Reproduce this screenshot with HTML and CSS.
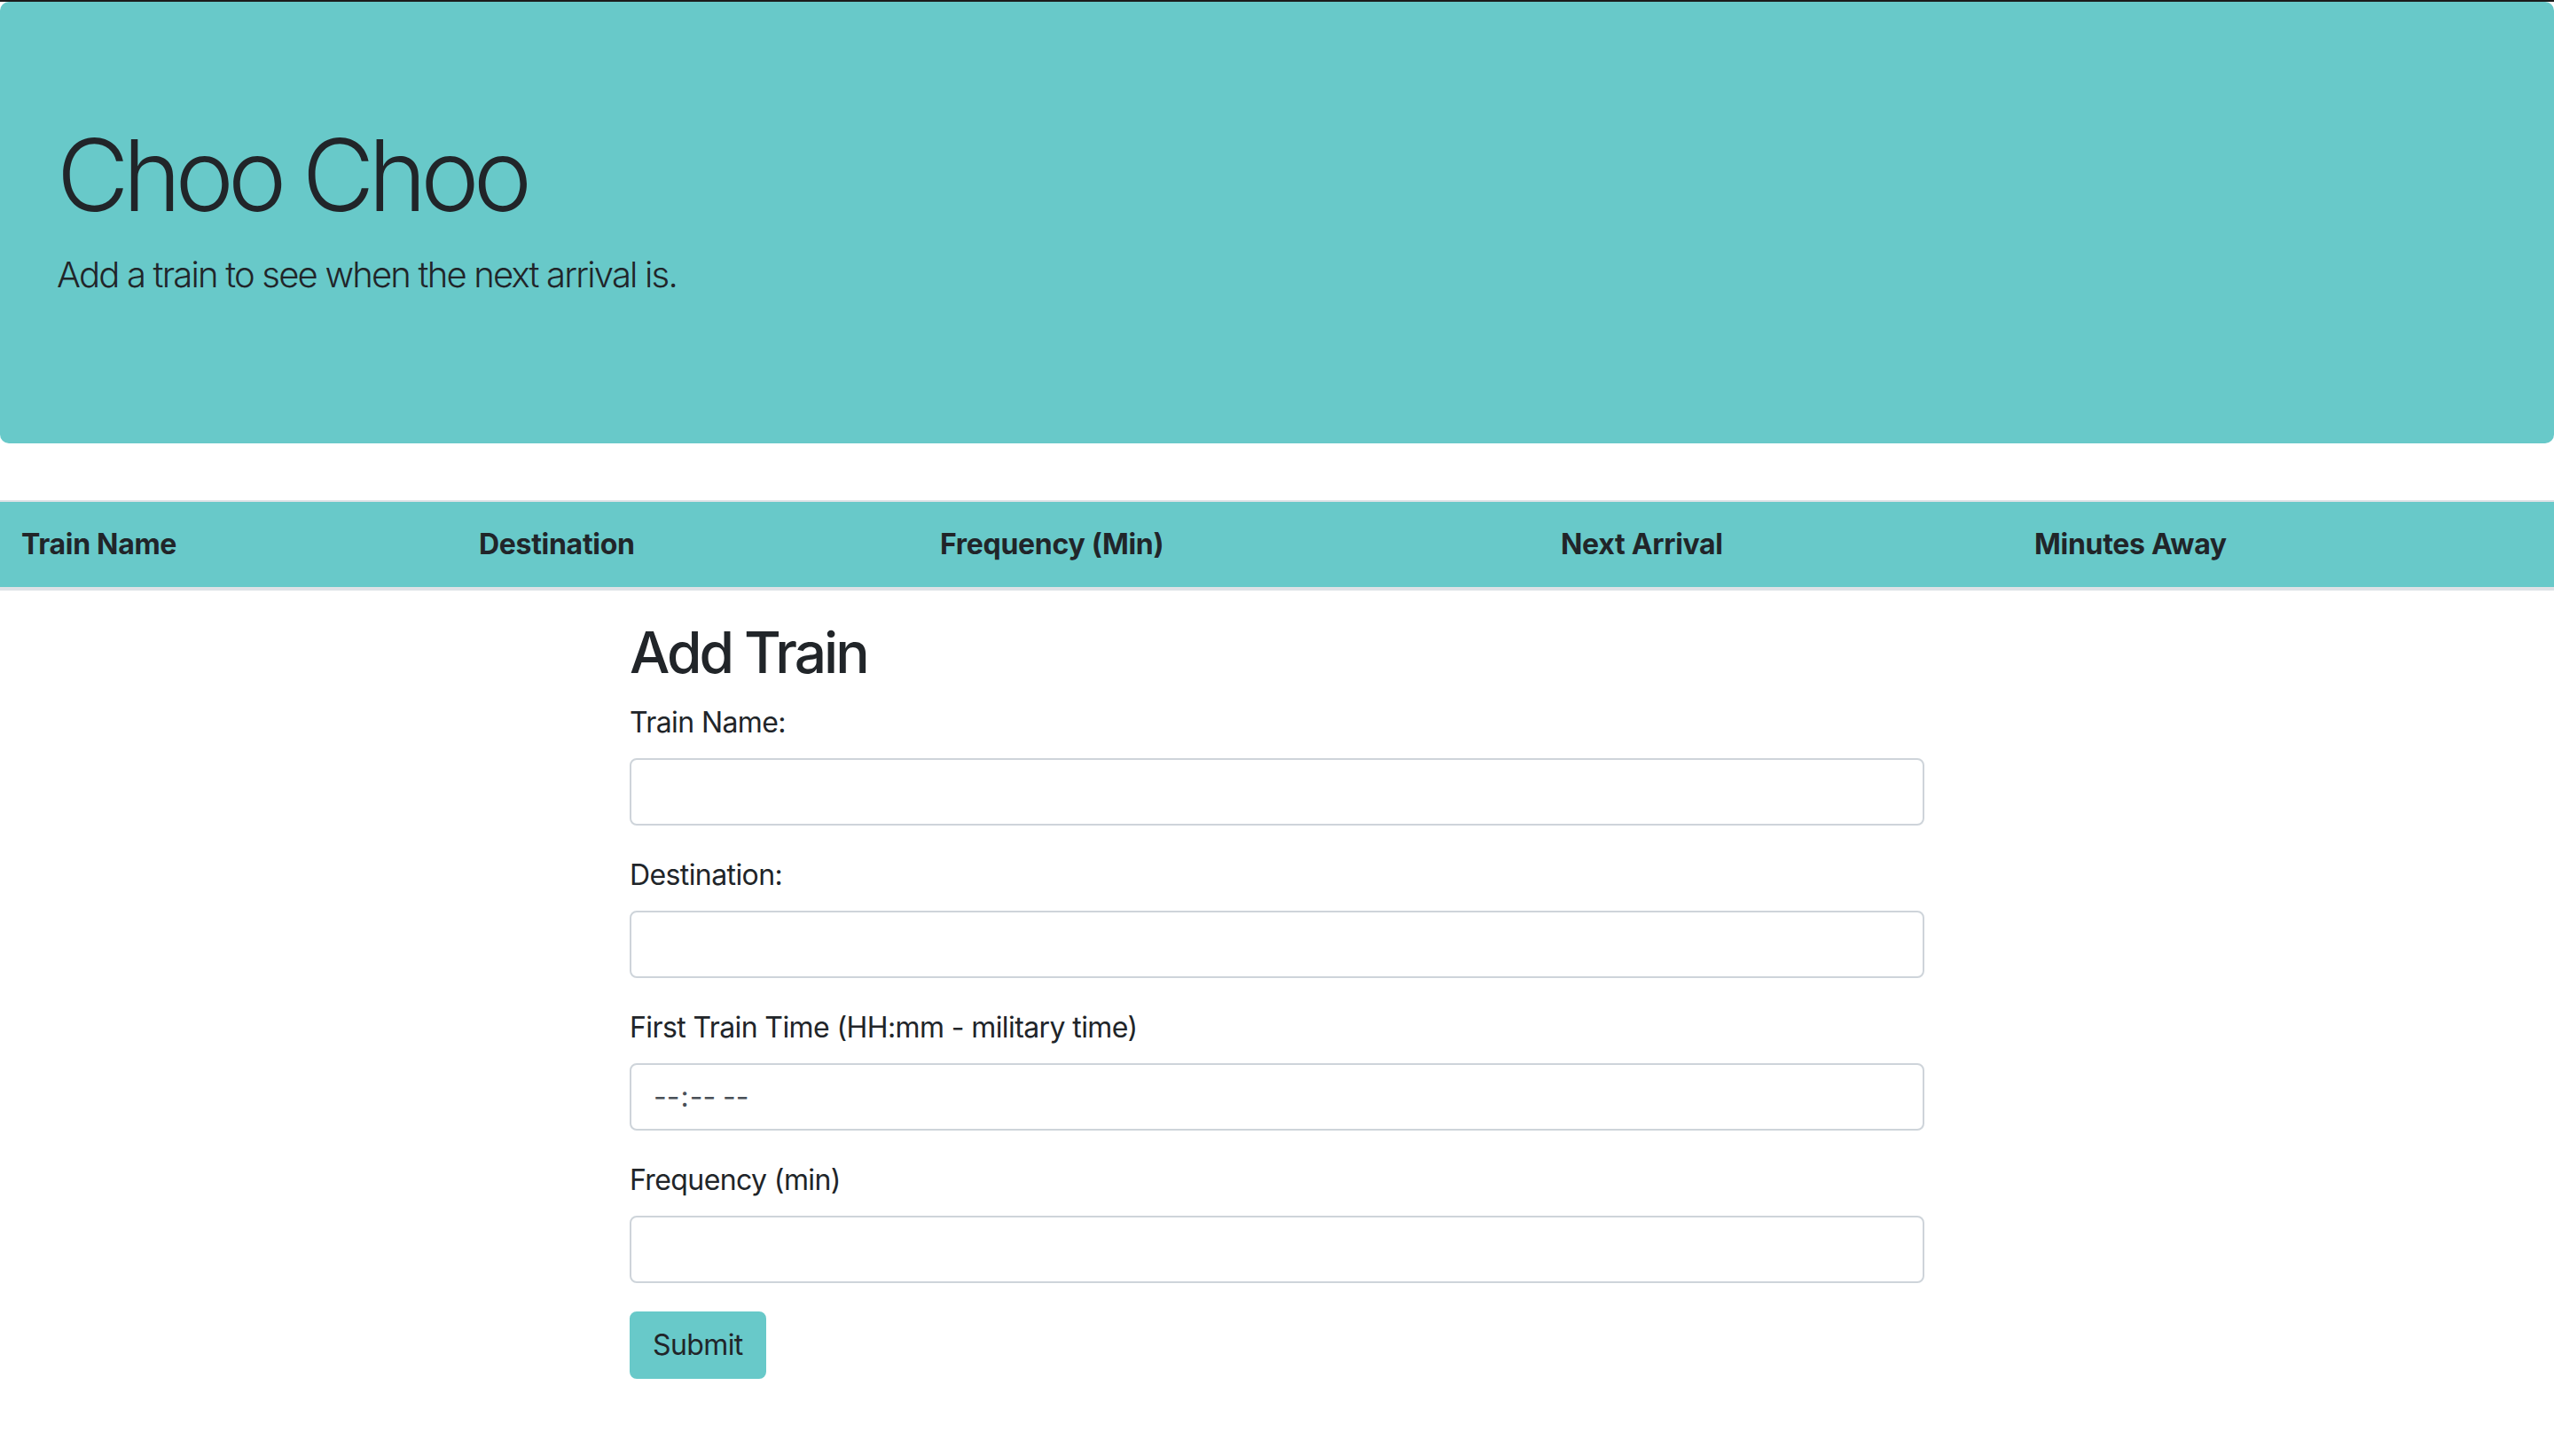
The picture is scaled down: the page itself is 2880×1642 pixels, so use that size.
FILE: index.html
```html
<!DOCTYPE html>
<html lang="en">
<head>
<meta charset="utf-8">
<title>Choo Choo</title>
<link rel="stylesheet" href="styles.css">
</head>
<body>
<div class="topline"></div>
<header class="jumbotron">
  <h1 class="display-4">Choo Choo</h1>
  <p class="lead">Add a train to see when the next arrival is.</p>
</header>
<table class="table">
  <thead>
    <tr>
      <th class="c1">Train Name</th>
      <th class="c2">Destination</th>
      <th class="c3">Frequency (Min)</th>
      <th class="c4">Next Arrival</th>
      <th class="c5">Minutes Away</th>
    </tr>
  </thead>
  <tbody></tbody>
</table>
<main class="container">
  <div class="col">
    <h2 class="title">Add Train</h2>
    <form class="form">
      <div class="form-group">
        <label for="name">Train Name:</label>
        <input class="form-control" id="name" type="text">
      </div>
      <div class="form-group">
        <label for="dest">Destination:</label>
        <input class="form-control" id="dest" type="text">
      </div>
      <div class="form-group">
        <label for="time">First Train Time (HH:mm - military time)</label>
        <input class="form-control time" id="time" type="time">
      </div>
      <div class="form-group">
        <label for="freq">Frequency (min)</label>
        <input class="form-control" id="freq" type="text">
      </div>
      <button class="btn" type="button">Submit</button>
    </form>
  </div>
</main>
</body>
</html>
```
FILE: styles.css
```css
html { font-size: 32px; }
* { box-sizing: border-box; }
body {
  margin: 0;
  font-family: "Inter", "Roboto", "Liberation Sans", sans-serif;
  font-size: 1rem;
  line-height: 1.5;
  color: #212529;
  background: #fff;
}
.topline { height: 2px; background: #1c1c1c; }
.jumbotron {
  background: #68c9c9;
  padding: 4rem 2rem;
  margin-bottom: 2rem;
  border-radius: 10px;
}
.display-4 {
  margin: 0 0 .5rem;
  font-size: 3.5rem;
  font-weight: 300;
  line-height: 1.2;
  letter-spacing: -7px;
}
.lead {
  margin: 0 0 1rem;
  font-size: 1.25rem;
  font-weight: 300;
  letter-spacing: -1.8px;
}
.table {
  width: 100%;
  border-collapse: collapse;
  margin-bottom: 1rem;
}
.table th {
  text-align: left;
  font-weight: 700;
  padding: .75rem;
  background: #68c9c9;
  border-top: 2px solid #dee2e6;
  border-bottom: 4px solid #dee2e6;
  letter-spacing: -0.3px;
}
.c1 { width: 516px; }
.c2 { width: 520px; }
.c3 { width: 700px; }
.c4 { width: 534px; }
.container {
  width: 2280px;
  margin: 0 auto;
  padding: 0 30px;
}
.col {
  margin-left: 380px;
  width: 1460px;
}
.title {
  margin: 0 0 .5rem;
  font-size: 2rem;
  font-weight: 500;
  line-height: 1.2;
  letter-spacing: -3px;
}
.form-group { margin-bottom: 1rem; }
label {
  display: inline-block;
  margin-bottom: .5rem;
  letter-spacing: -0.6px;
}
.form-control {
  display: block;
  width: 100%;
  height: 76px;
  padding: 12px 24px;
  font-family: inherit;
  font-size: 1rem;
  line-height: 1.5;
  color: #495057;
  background: #fff;
  border: 2px solid #ced4da;
  border-radius: 8px;
  outline: none;
}
.time::-webkit-calendar-picker-indicator { display: none; }
.btn {
  display: inline-block;
  font-family: inherit;
  font-size: 1rem;
  line-height: 1.5;
  padding: 12px 24px;
  color: #212529;
  background: #68c9c9;
  border: 2px solid #68c9c9;
  border-radius: 8px;
  letter-spacing: -0.6px;
}
```
